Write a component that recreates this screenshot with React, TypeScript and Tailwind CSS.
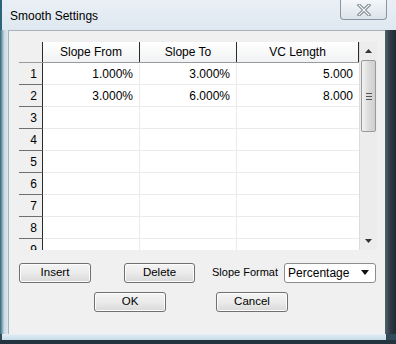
import React from "react";

const rows = [
  { n: 1, from: "1.000%", to: "3.000%", vc: "5.000" },
  { n: 2, from: "3.000%", to: "6.000%", vc: "8.000" },
  { n: 3 },
  { n: 4 },
  { n: 5 },
  { n: 6 },
  { n: 7 },
  { n: 8 },
  { n: 9 },
] as { n: number; from?: string; to?: string; vc?: string }[];

const Btn: React.FC<{ w?: string; className?: string; children: React.ReactNode }> = ({
  children,
  w = "w-[72px]",
  className = "",
}) => (
  <button
    className={`${w} ${className} block h-[20px] rounded-[3px] border border-[#707070] bg-gradient-to-b from-[#f4f4f4] via-[#ebebeb] to-[#d9d9d9] text-[11.5px] text-black leading-none shadow-[inset_0_0_0_1px_#fcfcfc]`}
  >
    {children}
  </button>
);

const App: React.FC = () => {
  return (
    <div
      className="w-[396px] h-[344px] overflow-hidden flex flex-col bg-[#2f4a58]"
      style={{ fontFamily: '"Liberation Sans", Arial, sans-serif' }}
    >
      {/* title bar */}
      <div className="h-[30px] flex items-start bg-gradient-to-b from-[#e9eff5] to-[#dfe8f0] border-l-2 border-[#2c6478]">
        <div className="pl-[8px] pt-[7px] text-[12px] text-black">Smooth Settings</div>
        <div className="ml-auto mr-[9px] w-[47px] h-[20px] rounded-b-[4px] border border-t-0 border-[#8a97a3] bg-gradient-to-b from-[#f4f7fa] to-[#dbe3ea] flex items-center justify-center">
          <svg width="14" height="12" viewBox="0 0 14 12">
            <path d="M2 1 L12 11 M12 1 L2 11" stroke="#7d868e" strokeWidth="3.2" strokeLinecap="square" />
            <path d="M2 1 L12 11 M12 1 L2 11" stroke="#f4f6f8" strokeWidth="1.2" strokeLinecap="square" />
          </svg>
        </div>
      </div>

      <div className="flex h-[304px]">
        {/* left frame */}
        <div className="w-[8px] bg-gradient-to-r from-[#2c6478] via-[#c9d8e3] to-[#dfe8f0]" />
        {/* client */}
        <div className="w-[377px] bg-[#f0f0f0] border-l border-t border-[#a9b3bb] flex flex-col pl-[10px] pt-[11px]">
          {/* grid */}
          <div className="w-[358px] h-[208px] bg-white flex overflow-hidden">
            <div className="w-[340px] flex flex-col">
              <div className="flex h-[21px] shrink-0 text-[12px] bg-gradient-to-b from-[#ffffff] to-[#f1f2f3] border-b border-[#9a9a9a]">
                <div className="w-[24px] bg-[#f0f0f0] border-r border-[#2a2a2a]" />
                <div className="w-[97px] flex items-center justify-center border-r border-[#2a2a2a]">Slope From</div>
                <div className="w-[97px] flex items-center justify-center border-r border-[#2a2a2a]">Slope To</div>
                <div className="w-[122px] flex items-center justify-center border-r border-[#2a2a2a]">VC Length</div>
              </div>
              {rows.map((r) => (
                <div key={r.n} className="flex h-[22px] shrink-0 text-[12px]">
                  <div className="w-[24px] bg-[#f0f0f0] border-r border-b border-r-[#2a2a2a] border-b-[#6f6f6f] flex items-center justify-end pr-[5px]">
                    {r.n}
                  </div>
                  <div className="w-[97px] flex items-center justify-end pr-[6px] border-r border-b border-[#ebebeb]">{r.from}</div>
                  <div className="w-[97px] flex items-center justify-end pr-[6px] border-r border-b border-[#ebebeb]">{r.to}</div>
                  <div className="w-[122px] flex items-center justify-end pr-[6px] border-b border-[#ebebeb]">{r.vc}</div>
                </div>
              ))}
            </div>
            {/* scrollbar */}
            <div className="w-[18px] bg-[#ececec] border-l border-[#dcdcdc] flex flex-col items-center">
              <div className="h-[18px] flex items-center justify-center">
                <svg width="7" height="4" viewBox="0 0 7 4">
                  <path d="M0 4 L3.5 0 L7 4 Z" fill="#333" />
                </svg>
              </div>
              <div className="w-[15px] h-[72px] rounded-[2px] border border-[#9a9a9a] bg-gradient-to-r from-[#f2f2f2] via-[#dcdcdc] to-[#cfcfcf] flex flex-col items-center justify-center gap-[2px]">
                <div className="w-[6px] h-px bg-[#555]" />
                <div className="w-[6px] h-px bg-[#555]" />
                <div className="w-[6px] h-px bg-[#555]" />
              </div>
              <div className="mt-auto h-[18px] flex items-center justify-center">
                <svg width="7" height="4" viewBox="0 0 7 4">
                  <path d="M0 0 L3.5 4 L7 0 Z" fill="#333" />
                </svg>
              </div>
            </div>
          </div>

          {/* controls row */}
          <div className="flex items-center mt-[12px] h-[21px]">
            <Btn>Insert</Btn>
            <Btn w="w-[71px]" className="ml-[33px]">Delete</Btn>
            <div className="ml-[17px] text-[11px] text-black">Slope Format</div>
            <div className="ml-[6px] w-[92px] h-[20px] rounded-[3px] border border-[#8d8d8d] bg-white flex items-center pl-[3px] pr-[6px] text-[12px]">
              Percentage
              <svg className="ml-auto" width="8" height="5" viewBox="0 0 8 5">
                <path d="M0 0 L4 5 L8 0 Z" fill="#111" />
              </svg>
            </div>
          </div>
          <div className="flex mt-[9px] pl-[75px]">
            <Btn>OK</Btn>
            <Btn className="ml-[50px]">Cancel</Btn>
          </div>
        </div>
        {/* right frame */}
        <div className="w-[11px] bg-gradient-to-r from-[#55626c] via-[#2d3a44] to-[#1f2b33]" />
      </div>

      {/* bottom frame */}
      <div className="h-[10px] flex flex-col">
        <div className="h-[6px] bg-gradient-to-b from-[#e4eef5] to-[#c6dbe8] ml-[2px] mr-[10px]" />
        <div className="flex-1 bg-[#22343e]" />
      </div>
    </div>
  );
};

export default App;
